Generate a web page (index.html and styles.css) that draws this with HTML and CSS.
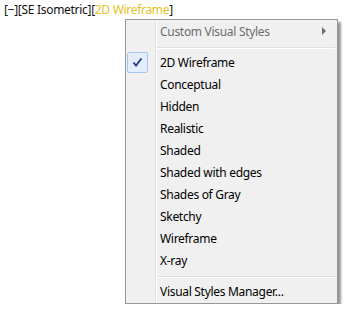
FILE: index.html
```html
<!DOCTYPE html>
<html lang="en">
<head>
    <meta charset="UTF-8">
    <meta name="viewport" content="width=device-width, initial-scale=1.0">
    <title>Visual Styles</title>
    <link rel="stylesheet" href="styles.css">
</head>
<body>

    <div class="viewport-label">[&minus;][SE Isometric][<span class="current">2D Wireframe</span>]</div>

    <div class="menu">
        <div class="item disabled has-sub">
            <span class="icon"></span>
            <span class="label">Custom Visual Styles</span>
            <span class="arrow"></span>
        </div>
        <div class="separator"></div>
        <div class="item checked">
            <span class="icon">
                <span class="check">
                    <svg width="11" height="11" viewBox="0 0 11 11">
                        <path d="M1.5 5.5 L4 8.5 L9.5 1.5" fill="none" stroke="#1f3a93" stroke-width="1.8"/>
                    </svg>
                </span>
            </span>
            <span class="label">2D Wireframe</span>
        </div>
        <div class="item"><span class="icon"></span><span class="label">Conceptual</span></div>
        <div class="item"><span class="icon"></span><span class="label">Hidden</span></div>
        <div class="item"><span class="icon"></span><span class="label">Realistic</span></div>
        <div class="item"><span class="icon"></span><span class="label">Shaded</span></div>
        <div class="item"><span class="icon"></span><span class="label">Shaded with edges</span></div>
        <div class="item"><span class="icon"></span><span class="label">Shades of Gray</span></div>
        <div class="item"><span class="icon"></span><span class="label">Sketchy</span></div>
        <div class="item"><span class="icon"></span><span class="label">Wireframe</span></div>
        <div class="item"><span class="icon"></span><span class="label">X-ray</span></div>
        <div class="separator"></div>
        <div class="item"><span class="icon"></span><span class="label">Visual Styles Manager...</span></div>
    </div>

</body>
</html>
```

FILE: styles.css
```css
body {
    margin: 0;
    background-color: #fff;
    font-family: "Noto Sans", "Open Sans", sans-serif;
    font-size: 12px;
    letter-spacing: -0.3px;
    color: #000;
}
.viewport-label {
    height: 19px;
    line-height: 19px;
    padding-left: 4px;
    color: #111;
}
.viewport-label .current {
    color: #e6c21e;
}
.menu {
    width: 211px;
    margin-left: 125px;
    padding-bottom: 1px;
    border: 1px solid #979797;
    background-color: #f0f0f0;
    background-image: linear-gradient(to right, transparent 29px, #e2e3e3 29px, #e2e3e3 30px, #fff 30px, #fff 31px, transparent 31px);
    box-shadow: 3px 3px 2px rgba(0, 0, 0, 0.4);
}
.item {
    display: flex;
    align-items: center;
    height: 22px;
}
.icon {
    display: flex;
    width: 34px;
    height: 22px;
    align-items: center;
}
.check {
    display: flex;
    align-items: center;
    justify-content: center;
    width: 19px;
    height: 19px;
    margin-left: 1px;
    border: 1px solid #a8c5ef;
    border-radius: 2px;
    background-color: #e4edfb;
}
.label {
    flex: 1;
    white-space: nowrap;
}
.disabled .label {
    color: #6d6d6d;
}
.arrow {
    width: 0;
    height: 0;
    margin-right: 11px;
    border-top: 4px solid transparent;
    border-bottom: 4px solid transparent;
    border-left: 4px solid #6d6d6d;
}
.separator {
    height: 0;
    margin: 5px 2px 2px 31px;
    border-top: 1px solid #e0e0e0;
    border-bottom: 1px solid #fff;
}
```
